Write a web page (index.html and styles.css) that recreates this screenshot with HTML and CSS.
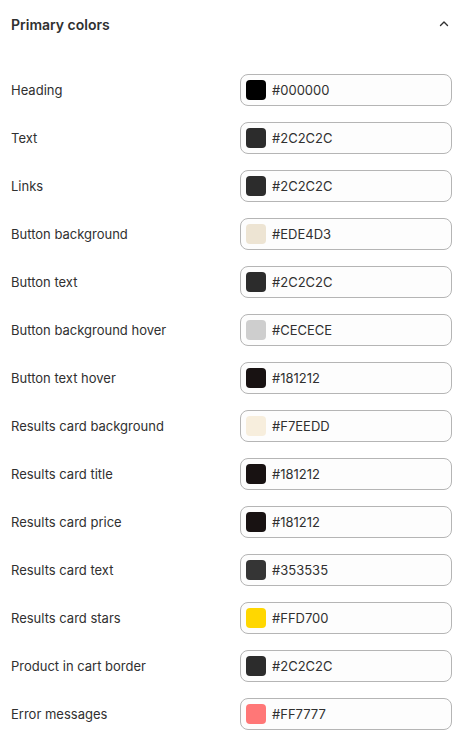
FILE: index.html
```html
<!DOCTYPE html>
<html lang="en">
  <head>
    <meta charset="UTF-8" />
    <title>Primary colors</title>
    <link rel="stylesheet" href="styles.css">
  </head>
  <body>
    <div class="section">
      <div class="section-header">
        <span class="section-title">Primary colors</span>
        <svg class="chevron" width="12" height="12" viewBox="0 0 12 12">
          <path d="M2.5 7.5 L6 4 L9.5 7.5" fill="none" stroke="#303030" stroke-width="1.4" stroke-linecap="round" stroke-linejoin="round" />
        </svg>
      </div>

      <div class="rows">
        <div class="row">
          <span class="label">Heading</span>
          <div class="color-input"><span class="swatch" style="background: #000000"></span><span class="hex">#000000</span></div>
        </div>
        <div class="row">
          <span class="label">Text</span>
          <div class="color-input"><span class="swatch" style="background: #2C2C2C"></span><span class="hex">#2C2C2C</span></div>
        </div>
        <div class="row">
          <span class="label">Links</span>
          <div class="color-input"><span class="swatch" style="background: #2C2C2C"></span><span class="hex">#2C2C2C</span></div>
        </div>
        <div class="row">
          <span class="label">Button background</span>
          <div class="color-input"><span class="swatch" style="background: #EDE4D3"></span><span class="hex">#EDE4D3</span></div>
        </div>
        <div class="row">
          <span class="label">Button text</span>
          <div class="color-input"><span class="swatch" style="background: #2C2C2C"></span><span class="hex">#2C2C2C</span></div>
        </div>
        <div class="row">
          <span class="label">Button background hover</span>
          <div class="color-input"><span class="swatch" style="background: #CECECE"></span><span class="hex">#CECECE</span></div>
        </div>
        <div class="row">
          <span class="label">Button text hover</span>
          <div class="color-input"><span class="swatch" style="background: #181212"></span><span class="hex">#181212</span></div>
        </div>
        <div class="row">
          <span class="label">Results card background</span>
          <div class="color-input"><span class="swatch" style="background: #F7EEDD"></span><span class="hex">#F7EEDD</span></div>
        </div>
        <div class="row">
          <span class="label">Results card title</span>
          <div class="color-input"><span class="swatch" style="background: #181212"></span><span class="hex">#181212</span></div>
        </div>
        <div class="row">
          <span class="label">Results card price</span>
          <div class="color-input"><span class="swatch" style="background: #181212"></span><span class="hex">#181212</span></div>
        </div>
        <div class="row">
          <span class="label">Results card text</span>
          <div class="color-input"><span class="swatch" style="background: #353535"></span><span class="hex">#353535</span></div>
        </div>
        <div class="row">
          <span class="label">Results card stars</span>
          <div class="color-input"><span class="swatch" style="background: #FFD700"></span><span class="hex">#FFD700</span></div>
        </div>
        <div class="row">
          <span class="label">Product in cart border</span>
          <div class="color-input"><span class="swatch" style="background: #2C2C2C"></span><span class="hex">#2C2C2C</span></div>
        </div>
        <div class="row">
          <span class="label">Error messages</span>
          <div class="color-input"><span class="swatch" style="background: #FF7777"></span><span class="hex">#FF7777</span></div>
        </div>
      </div>
    </div>
  </body>
</html>
```

FILE: styles.css
```css
body {
  font-family: 'Inter', 'Liberation Sans', sans-serif;
  background-color: #ffffff;
  color: #303030;
  margin: 0;
  font-size: 13px;
}

.section {
  padding: 0 17px 0 11px;
}

.section-header {
  display: flex;
  justify-content: space-between;
  align-items: center;
  height: 48px;
}

.section-title {
  font-size: 14px;
  font-weight: 600;
}

.chevron {
  margin-right: 2px;
}

.rows {
  display: flex;
  flex-direction: column;
  gap: 16px;
  padding-top: 26px;
}

.row {
  display: flex;
  justify-content: space-between;
  align-items: center;
  height: 32px;
}

.label {
  font-size: 13px;
}

.color-input {
  width: 212px;
  height: 32px;
  box-sizing: border-box;
  border: 1px solid #b5b5b5;
  border-radius: 8px;
  background: #fdfdfd;
  display: flex;
  align-items: center;
  padding-left: 5px;
  gap: 6px;
}

.swatch {
  width: 20px;
  height: 20px;
  border-radius: 4px;
}

.hex {
  font-size: 13px;
  color: #303030;
}
```
